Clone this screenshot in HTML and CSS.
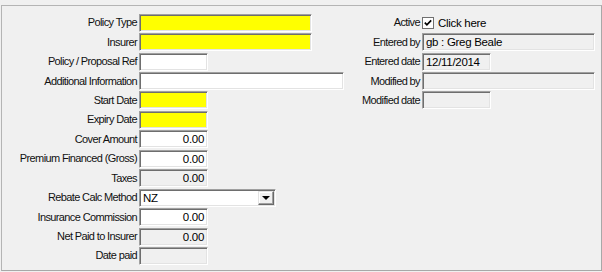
FILE: index.html
```html
<!DOCTYPE html>
<html>
<head>
<meta charset="utf-8">
<link rel="stylesheet" href="styles.css">
</head>
<body>
<div class="panel">
  <div class="col left">
    <div class="lbl">Policy Type</div><div class="fld req w-long"></div>
    <div class="lbl">Insurer</div><div class="fld req w-long"></div>
    <div class="lbl">Policy / Proposal Ref</div><div class="fld w-short"></div>
    <div class="lbl">Additional Information</div><div class="fld w-full"></div>
    <div class="lbl">Start Date</div><div class="fld req w-short"></div>
    <div class="lbl">Expiry Date</div><div class="fld req w-short"></div>
    <div class="lbl">Cover Amount</div><div class="fld w-short num">0.00</div>
    <div class="lbl">Premium Financed (Gross)</div><div class="fld w-short num">0.00</div>
    <div class="lbl">Taxes</div><div class="fld dis w-short num">0.00</div>
    <div class="lbl">Rebate Calc Method</div>
    <div class="fld sel w-sel"><span class="sel-text">NZ</span><span class="sel-btn"><span class="arrow"></span></span></div>
    <div class="lbl">Insurance Commission</div><div class="fld w-short num">0.00</div>
    <div class="lbl">Net Paid to Insurer</div><div class="fld dis w-short num">0.00</div>
    <div class="lbl">Date paid</div><div class="fld dis w-short"></div>
  </div>
  <div class="col right">
    <div class="lbl">Active</div>
    <div class="chk-row">
      <span class="chk"><svg width="10" height="10" viewBox="0 0 10 10"><path d="M1.8 4.6 L3.9 6.8 L8.2 2.4" fill="none" stroke="#000" stroke-width="1.7"/></svg></span>
      <span class="chk-text">Click here</span>
    </div>
    <div class="lbl">Entered by</div><div class="fld dis w-long">gb : Greg Beale</div>
    <div class="lbl">Entered date</div><div class="fld dis w-short">12/11/2014</div>
    <div class="lbl">Modified by</div><div class="fld dis w-long"></div>
    <div class="lbl">Modified date</div><div class="fld dis w-short"></div>
  </div>
</div>
</body>
</html>
```
FILE: styles.css
```css
html, body {
  margin: 0;
  padding: 0;
  background: #f0f0f0;
}
body {
  font-family: "Liberation Sans", Arial, sans-serif;
  font-size: 11px;
  color: #000;
  width: 602px;
  height: 272px;
  overflow: hidden;
}
.panel {
  box-sizing: border-box;
  margin: 5px 0 0 1px;
  width: 601px;
  height: 266px;
  border: 1px solid #b4b4b4;
  border-right-color: #a8a8a8;
  border-bottom-color: #a8a8a8;
  display: flex;
  padding-top: 7px;
}
.col {
  display: grid;
  grid-auto-rows: 19.45px;
  align-items: center;
  column-gap: 2px;
  align-content: start;
}
.left {
  grid-template-columns: 135px 205px;
}
.right {
  grid-template-columns: 76px 174px;
}
.lbl {
  text-align: right;
  white-space: nowrap;
  letter-spacing: -0.62px;
  line-height: 13px;
  color: #111;
}
.fld {
  box-sizing: border-box;
  height: 18px;
  background: #fff;
  border: 1px solid;
  border-color: #a0a0a0 #ffffff #ffffff #a0a0a0;
  box-shadow: inset 1px 1px 0 #6e6e6e, inset -1px -1px 0 #e3e3e3;
  line-height: 16px;
  padding: 0 3px;
  white-space: nowrap;
  overflow: hidden;
  letter-spacing: -0.3px;
  font-size: 11.5px;
}
.req { background: #ffff00; }
.dis { background: #f0f0f0; }
.num { text-align: right; }
.w-long { width: 173px; }
.w-short { width: 69px; }
.w-full { width: 205px; }
.w-sel { width: 137px; }
.sel {
  display: flex;
  align-items: center;
  padding: 0 1px 0 3px;
}
.sel-text { flex: 1; }
.sel-btn {
  box-sizing: border-box;
  width: 16px;
  height: 14px;
  background: #f0f0f0;
  border: 1px solid;
  border-color: #e3e3e3 #696969 #696969 #e3e3e3;
  box-shadow: inset -1px -1px 0 #a0a0a0, inset 1px 1px 0 #fff;
  display: flex;
  align-items: center;
  justify-content: center;
}
.arrow {
  width: 0;
  height: 0;
  border-left: 4px solid transparent;
  border-right: 4px solid transparent;
  border-top: 4px solid #000;
  margin-top: 1px;
}
.chk-row {
  display: flex;
  align-items: center;
  gap: 4px;
}
.chk {
  box-sizing: border-box;
  width: 12px;
  height: 12px;
  background: #fff;
  border: 1px solid #707070;
  display: flex;
  align-items: center;
  justify-content: center;
}
.chk svg { display: block; }
.chk-text {
  letter-spacing: -0.3px;
  font-size: 11.5px;
}
```
